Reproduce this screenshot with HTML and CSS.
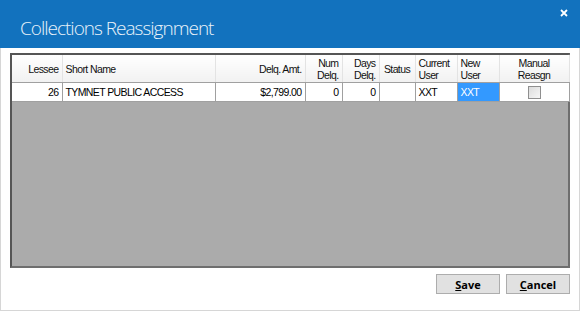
FILE: index.html
```html
<!DOCTYPE html>
<html lang="en">
<head>
  <meta charset="UTF-8" />
  <title>Collections Reassignment</title>
  <link rel="stylesheet" href="styles.css">
</head>
<body>
  <div class="window">
    <div class="titlebar">
      <h1 class="title">Collections Reassignment</h1>
      <!-- close button -->
      <svg class="close" width="8" height="8" viewBox="0 0 8 8">
        <path d="M1 1 L7 7 M7 1 L1 7" stroke="#fff" stroke-width="1.8" />
      </svg>
    </div>

    <div class="content">
      <div class="grid">
        <table class="sheet">
          <colgroup>
            <col class="c-lessee">
            <col class="c-name">
            <col class="c-amt">
            <col class="c-num">
            <col class="c-days">
            <col class="c-status">
            <col class="c-cur">
            <col class="c-new">
            <col class="c-manual">
          </colgroup>
          <thead>
            <tr>
              <th class="right">Lessee</th>
              <th>Short Name</th>
              <th class="right">Delq. Amt.</th>
              <th class="right">Num<br>Delq.</th>
              <th class="right">Days<br>Delq.</th>
              <th class="center">Status</th>
              <th>Current<br>User</th>
              <th>New<br>User</th>
              <th class="center">Manual<br>Reasgn</th>
            </tr>
          </thead>
          <tbody>
            <tr>
              <td class="right">26</td>
              <td>TYMNET PUBLIC ACCESS</td>
              <td class="right">$2,799.00</td>
              <td class="right">0</td>
              <td class="right">0</td>
              <td></td>
              <td>XXT</td>
              <td class="selected">XXT</td>
              <td class="center"><span class="check"></span></td>
            </tr>
          </tbody>
        </table>
      </div>

      <div class="actions">
        <button class="btn"><u>S</u>ave</button>
        <button class="btn"><u>C</u>ancel</button>
      </div>
    </div>
  </div>
</body>
</html>
```

FILE: styles.css
```css
/* Dialog window */
body {
  margin: 0;
  font-family: "Liberation Sans", Arial, sans-serif;
  background-color: #fff;
}
.window {
  width: 580px;
  height: 311px;
  box-sizing: border-box;
  border: 1px solid #d6d6d6;
  border-top: none;
  background-color: #fff;
}
.titlebar {
  position: relative;
  height: 48px;
  margin: 0 -1px;
  background-color: #1272be;
}
.title {
  margin: 0;
  padding: 15px 0 0 20px;
  font-family: "Open Sans", sans-serif;
  font-weight: 300;
  font-size: 19px;
  letter-spacing: -1px;
  color: #eaf2fa;
}
.close {
  position: absolute;
  top: 9px;
  right: 12px;
}
.content {
  padding: 5px 9px 0 9px;
}

/* Data grid */
.grid {
  height: 211px;
  border: 2px solid #555;
  border-right-color: #6e6e6e;
  border-bottom-color: #6e6e6e;
  background-color: #ababab;
}
.sheet {
  border-collapse: collapse;
  table-layout: fixed;
  width: 557px;
  font-size: 10.5px;
  letter-spacing: -0.6px;
}
.c-lessee { width: 50px; }
.c-name { width: 153px; }
.c-amt { width: 90px; }
.c-num { width: 37px; }
.c-days { width: 37px; }
.c-status { width: 36px; }
.c-cur { width: 42px; }
.c-new { width: 42px; }
.c-manual { width: 70px; }

th {
  height: 27px;
  padding: 0 3px;
  font-weight: normal;
  text-align: left;
  line-height: 12px;
  color: #111;
  background: linear-gradient(#fff, #f1f1f1);
  border-right: 1px solid #e3e3e3;
  border-bottom: 1px solid #a0a0a0;
}
td {
  height: 18px;
  padding: 0 3px;
  background-color: #fff;
  border-right: 1px solid #a0a0a0;
  border-bottom: 1px solid #a0a0a0;
  white-space: nowrap;
  overflow: hidden;
}
.right { text-align: right; }
.center { text-align: center; }
td.selected {
  background-color: #3399ff;
  color: #fff;
}
.check {
  display: inline-block;
  width: 11px;
  height: 11px;
  vertical-align: middle;
  border: 1px solid #8f8f8f;
  background: linear-gradient(135deg, #dcdcdc, #f6f6f6);
}

/* Buttons */
.actions {
  display: flex;
  justify-content: flex-end;
  gap: 6px;
  margin-top: 6px;
}
.btn {
  width: 64px;
  height: 20px;
  padding: 0;
  font-family: "Open Sans", sans-serif;
  font-weight: bold;
  font-size: 11px;
  color: #000;
  background-color: #e1e1e1;
  border: 1px solid #adadad;
}
```
